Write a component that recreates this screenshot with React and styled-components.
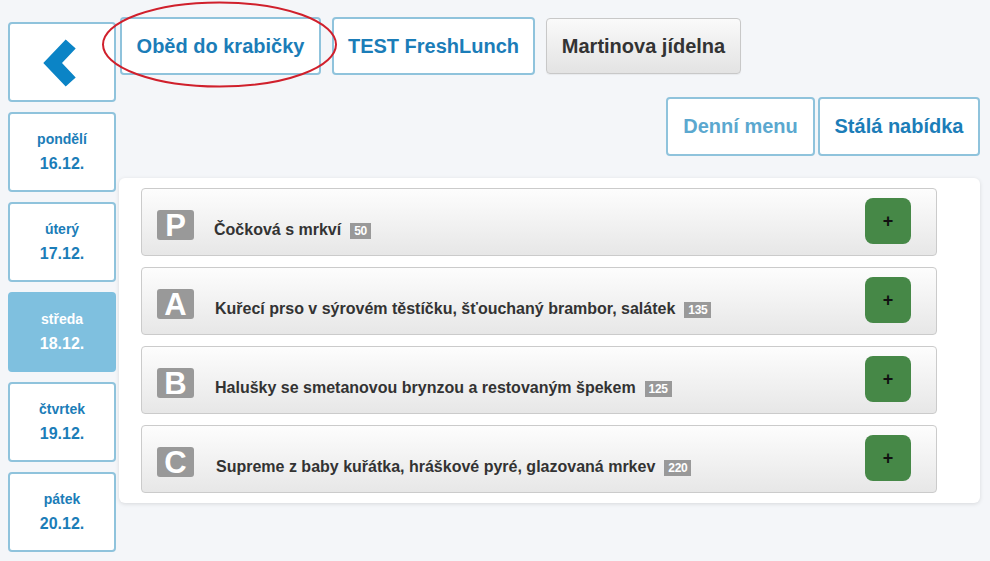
import React from "react";
import styled, { createGlobalStyle, css } from "styled-components";

const Global = createGlobalStyle`
  html, body { margin: 0; padding: 0; }
  body {
    background: #f4f6f9;
    font-family: "Liberation Sans", Arial, sans-serif;
    width: 990px;
    height: 561px;
    overflow: hidden;
  }
`;

const Page = styled.div`
  position: relative;
  display: flex;
  align-items: flex-start;
  padding-left: 8px;
  height: 561px;
  box-sizing: border-box;
`;

const Side = styled.nav`
  width: 108px;
  flex: none;
  display: flex;
  flex-direction: column;
  gap: 10px;
  padding-top: 22px;
`;

const tile = css`
  box-sizing: border-box;
  width: 108px;
  height: 80px;
  border: 2px solid #8fc3dc;
  border-radius: 4px;
  background: #fff;
`;

const BackButton = styled.div`
  ${tile};
  display: flex;
  align-items: center;
  justify-content: center;
  padding-right: 5px;
  padding-top: 1px;
`;

const DayButton = styled.div`
  ${tile};
  display: flex;
  flex-direction: column;
  align-items: center;
  padding-top: 16px;
  font-weight: bold;
  color: ${(p) => (p.$active ? "#fff" : "#1b7db8")};
  background: ${(p) => (p.$active ? "#7fc0df" : "#fff")};
  border-color: ${(p) => (p.$active ? "#7fc0df" : "#8fc3dc")};
`;

const DayName = styled.span`
  font-size: 14px;
  line-height: 18px;
`;

const DayDate = styled.span`
  font-size: 16px;
  line-height: 20px;
  margin-top: 6px;
`;

const Main = styled.main`
  margin-left: 3px;
  width: 861px;
  display: flex;
  flex-direction: column;
`;

const TopRow = styled.div`
  display: flex;
  align-items: center;
  gap: 11px;
  padding-top: 17px;
  padding-left: 1px;
`;

const NavButton = styled.div`
  box-sizing: border-box;
  width: ${(p) => p.$w}px;
  height: ${(p) => (p.$gray ? "56px" : "58px")};
  display: flex;
  align-items: center;
  justify-content: center;
  font-size: 20px;
  font-weight: bold;
  border-radius: 4px;
  white-space: nowrap;
  ${(p) =>
    p.$gray
      ? css`
          color: #333;
          border: 1px solid #c8c8c8;
          background: linear-gradient(#fafafa, #e3e3e3);
          box-shadow: 0 1px 1px rgba(0, 0, 0, 0.05);
        `
      : css`
          color: ${p.$light ? "#5ba8cf" : "#1b7db8"};
          border: 2px solid #8fc3dc;
          background: #fff;
        `}
`;

const ModeRow = styled.div`
  display: flex;
  justify-content: flex-end;
  gap: 3px;
  margin-top: 22px;
`;

const ModeButton = styled(NavButton)`
  height: 59px;
`;

const Panel = styled.section`
  margin-top: 22px;
  background: #fff;
  border-radius: 6px;
  box-shadow: 0 1px 4px rgba(0, 0, 0, 0.12);
  padding: 10px 43px 10px 22px;
  display: flex;
  flex-direction: column;
  gap: 11px;
`;

const Row = styled.div`
  box-sizing: border-box;
  height: 68px;
  border: 1px solid #cbcbcb;
  border-radius: 4px;
  background: linear-gradient(#fdfdfd, #e7e7e7);
  display: flex;
  align-items: flex-start;
  padding: 21px 25px 0 15px;
`;

const Letter = styled.div`
  flex: none;
  width: 37px;
  height: 30px;
  border-radius: 3px;
  background: #999;
  color: #fff;
  font-size: 31px;
  font-weight: bold;
  line-height: 31px;
  text-align: center;
`;

const Dish = styled.div`
  flex: 1;
  margin-top: 10px;
  margin-left: ${(p) => p.$ml || 21}px;
  font-size: 16px;
  line-height: 20px;
  font-weight: bold;
  color: #333;
`;

const Count = styled.span`
  display: inline-block;
  vertical-align: 0px;
  margin-left: 9px;
  padding: 0 4px;
  height: 16px;
  line-height: 17px;
  font-size: 12px;
  font-weight: bold;
  letter-spacing: -0.3px;
  background: #999;
  color: #fff;
`;

const AddButton = styled.div`
  flex: none;
  margin-top: -12px;
  width: 46px;
  height: 46px;
  border-radius: 8px;
  background: #468847;
  color: #111;
  display: flex;
  align-items: center;
  justify-content: center;
  font-size: 18px;
  font-weight: bold;
`;

const Ellipse = styled.svg`
  position: absolute;
  left: 100px;
  top: 0;
  pointer-events: none;
`;

const days = [
  ["pondělí", "16.12."],
  ["úterý", "17.12."],
  ["středa", "18.12.", true],
  ["čtvrtek", "19.12."],
  ["pátek", "20.12."],
];

const meals = [
  ["P", "Čočková s mrkví", "50", 20],
  ["A", "Kuřecí prso v sýrovém těstíčku, šťouchaný brambor, salátek", "135", 21],
  ["B", "Halušky se smetanovou brynzou a restovaným špekem", "125", 21],
  ["C", "Supreme z baby kuřátka, hráškové pyré, glazovaná mrkev", "220", 22],
];

export default function App() {
  return (
    <Page>
      <Global />
      <Side>
        <BackButton>
          <svg width="35" height="48" viewBox="0 0 35 48">
            <polygon
              points="23.7,0.5 33.7,9.5 20,24 33.7,38.5 23.7,47.5 1.3,24"
              fill="#0b84c6"
            />
          </svg>
        </BackButton>
        {days.map(([n, d, a]) => (
          <DayButton key={n} $active={a}>
            <DayName>{n}</DayName>
            <DayDate>{d}</DayDate>
          </DayButton>
        ))}
      </Side>
      <Main>
        <TopRow>
          <NavButton $w={201}>Oběd do krabičky</NavButton>
          <NavButton $w={203}>TEST FreshLunch</NavButton>
          <NavButton $gray $w={195}>Martinova jídelna</NavButton>
        </TopRow>
        <ModeRow>
          <ModeButton $light $w={149}>Denní menu</ModeButton>
          <ModeButton $w={162}>Stálá nabídka</ModeButton>
        </ModeRow>
        <Panel>
          {meals.map(([l, t, c, ml]) => (
            <Row key={l}>
              <Letter>{l}</Letter>
              <Dish $ml={ml}>
                {t}
                <Count>{c}</Count>
              </Dish>
              <AddButton>+</AddButton>
            </Row>
          ))}
        </Panel>
      </Main>
      <Ellipse width="240" height="90" viewBox="0 0 240 90">
        <ellipse
          cx="119.5"
          cy="44.5"
          rx="116.5"
          ry="42"
          fill="none"
          stroke="#d0202c"
          strokeWidth="2"
        />
      </Ellipse>
    </Page>
  );
}
